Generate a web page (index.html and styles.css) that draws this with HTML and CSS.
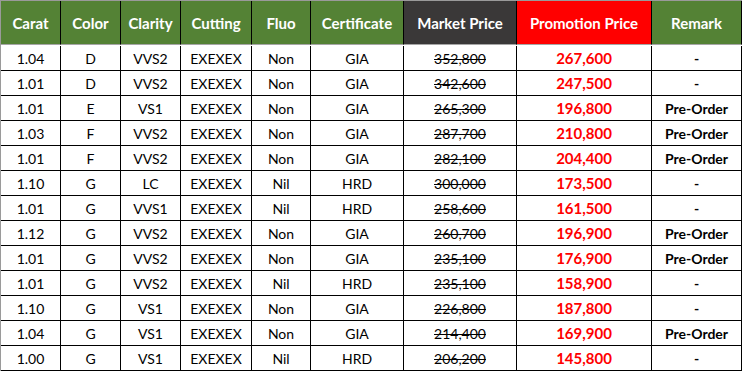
FILE: index.html
```html
<!DOCTYPE html>
<html>
<head>
<meta charset="utf-8">
<link rel="stylesheet" href="styles.css">
</head>
<body>
<div class="sheet">
  <div class="h g">Carat</div><div class="h g">Color</div><div class="h g">Clarity</div><div class="h g">Cutting</div><div class="h g">Fluo</div><div class="h g">Certificate</div><div class="h d">Market Price</div><div class="h r">Promotion Price</div><div class="h g">Remark</div>

  <div class="c">1.04</div><div class="c">D</div><div class="c">VVS2</div><div class="c">EXEXEX</div><div class="c">Non</div><div class="c">GIA</div><div class="c m">352,800</div><div class="c p">267,600</div><div class="c k">-</div>
  <div class="c">1.01</div><div class="c">D</div><div class="c">VVS2</div><div class="c">EXEXEX</div><div class="c">Non</div><div class="c">GIA</div><div class="c m">342,600</div><div class="c p">247,500</div><div class="c k">-</div>
  <div class="c">1.01</div><div class="c">E</div><div class="c">VS1</div><div class="c">EXEXEX</div><div class="c">Non</div><div class="c">GIA</div><div class="c m">265,300</div><div class="c p">196,800</div><div class="c k">Pre-Order</div>
  <div class="c">1.03</div><div class="c">F</div><div class="c">VVS2</div><div class="c">EXEXEX</div><div class="c">Non</div><div class="c">GIA</div><div class="c m">287,700</div><div class="c p">210,800</div><div class="c k">Pre-Order</div>
  <div class="c">1.01</div><div class="c">F</div><div class="c">VVS2</div><div class="c">EXEXEX</div><div class="c">Non</div><div class="c">GIA</div><div class="c m">282,100</div><div class="c p">204,400</div><div class="c k">Pre-Order</div>
  <div class="c">1.10</div><div class="c">G</div><div class="c">LC</div><div class="c">EXEXEX</div><div class="c">Nil</div><div class="c">HRD</div><div class="c m">300,000</div><div class="c p">173,500</div><div class="c k">-</div>
  <div class="c">1.01</div><div class="c">G</div><div class="c">VVS1</div><div class="c">EXEXEX</div><div class="c">Nil</div><div class="c">HRD</div><div class="c m">258,600</div><div class="c p">161,500</div><div class="c k">-</div>
  <div class="c">1.12</div><div class="c">G</div><div class="c">VVS2</div><div class="c">EXEXEX</div><div class="c">Non</div><div class="c">GIA</div><div class="c m">260,700</div><div class="c p">196,900</div><div class="c k">Pre-Order</div>
  <div class="c">1.01</div><div class="c">G</div><div class="c">VVS2</div><div class="c">EXEXEX</div><div class="c">Non</div><div class="c">GIA</div><div class="c m">235,100</div><div class="c p">176,900</div><div class="c k">Pre-Order</div>
  <div class="c">1.01</div><div class="c">G</div><div class="c">VVS2</div><div class="c">EXEXEX</div><div class="c">Nil</div><div class="c">HRD</div><div class="c m">235,100</div><div class="c p">158,900</div><div class="c k">-</div>
  <div class="c">1.10</div><div class="c">G</div><div class="c">VS1</div><div class="c">EXEXEX</div><div class="c">Non</div><div class="c">GIA</div><div class="c m">226,800</div><div class="c p">187,800</div><div class="c k">-</div>
  <div class="c">1.04</div><div class="c">G</div><div class="c">VS1</div><div class="c">EXEXEX</div><div class="c">Non</div><div class="c">GIA</div><div class="c m">214,400</div><div class="c p">169,900</div><div class="c k">Pre-Order</div>
  <div class="c">1.00</div><div class="c">G</div><div class="c">VS1</div><div class="c">EXEXEX</div><div class="c">Nil</div><div class="c">HRD</div><div class="c m">206,200</div><div class="c p">145,800</div><div class="c k">-</div>
</div>
</body>
</html>
```
FILE: styles.css
```css
html, body {
  margin: 0;
  padding: 0;
  background: #ffffff;
}
.sheet {
  width: 742px;
  box-sizing: border-box;
  display: grid;
  grid-template-columns: 60px 60px 60px 71px 59px 93px 113px 135px 90px;
  grid-template-rows: 45px repeat(13, 25px);
  border-top: 1px solid #9a9a9a;
  border-left: 1px solid #9a9a9a;
  font-family: "Lato", "Liberation Sans", sans-serif;
  color: #000000;
}
.h, .c {
  box-sizing: border-box;
  display: flex;
  align-items: center;
  justify-content: center;
  border-right: 1px solid #000000;
  white-space: nowrap;
}
.h {
  height: 44px;
  border-bottom: 1px solid #a6a6a6;
  color: #ffffff;
  font-weight: 700;
  font-size: 15px;
}
.c {
  border-bottom: 1px solid #000000;
  font-size: 14px;
}
.g { background: #548235; }
.d { background: #3a3838; }
.r { background: #ff0000; }
.m { text-decoration: line-through; }
.p {
  color: #ff0000;
  font-weight: 700;
  font-size: 15px;
}
.k { font-weight: 700; }
```
